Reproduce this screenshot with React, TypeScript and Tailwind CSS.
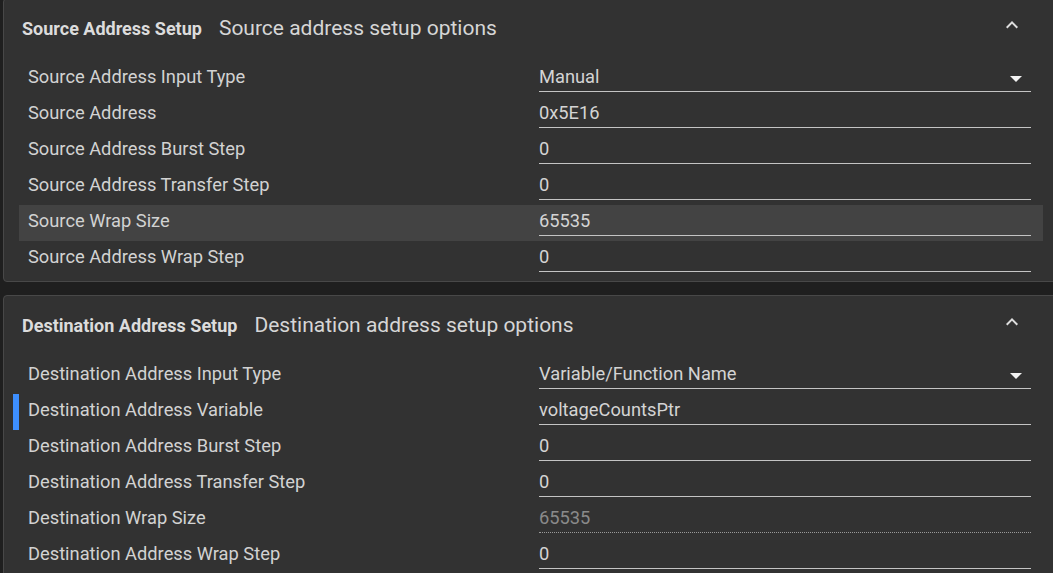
import React from 'react';

type Field = {
  label: string;
  value: string;
  select?: boolean;
  disabled?: boolean;
  hover?: boolean;
  active?: boolean;
};

const sourceFields: Field[] = [
  { label: 'Source Address Input Type', value: 'Manual', select: true },
  { label: 'Source Address', value: '0x5E16' },
  { label: 'Source Address Burst Step', value: '0' },
  { label: 'Source Address Transfer Step', value: '0' },
  { label: 'Source Wrap Size', value: '65535', hover: true },
  { label: 'Source Address Wrap Step', value: '0' },
];

const destFields: Field[] = [
  { label: 'Destination Address Input Type', value: 'Variable/Function Name', select: true },
  { label: 'Destination Address Variable', value: 'voltageCountsPtr', active: true },
  { label: 'Destination Address Burst Step', value: '0' },
  { label: 'Destination Address Transfer Step', value: '0' },
  { label: 'Destination Wrap Size', value: '65535', disabled: true },
  { label: 'Destination Address Wrap Step', value: '0' },
];

function ExpandLess() {
  return (
    <svg width="24" height="24" viewBox="0 0 24 24" className="fill-[#dedede]">
      <path d="M12 8l-6 6 1.41 1.41L12 10.83l4.59 4.58L18 14z" />
    </svg>
  );
}

function DropTriangle() {
  return (
    <svg width="12" height="6" viewBox="0 0 12 6" className="fill-[#f2f2f2]">
      <polygon points="0,0 12,0 6,6" />
    </svg>
  );
}

function Row({ field }: { field: Field }) {
  return (
    <div className="flex h-[36px]">
      {/* marqueur de ligne active */}
      <div className={'w-[6px] shrink-0 ' + (field.active ? 'bg-[#3d8fff]' : '')} />
      <div className={'flex flex-1 ' + (field.hover ? 'bg-[#434343]' : '')}>
        <div className="w-[520px] shrink-0 pl-[9px] leading-[32px] text-[18.3px] text-[#d2d2d2]">
          {field.label}
        </div>
        <div
          className={
            'w-[492px] h-[31px] flex items-center pt-[2px] pr-[9px] ' +
            (field.disabled
              ? 'border-b border-dotted border-[#9a9a9a]'
              : 'border-b border-[#c4c4c4]')
          }
        >
          <span
            className={
              'flex-1 text-[18.3px] leading-[28px] ' +
              (field.disabled ? 'text-[#8a8a8a]' : 'text-[#d4d4d4]')
            }
          >
            {field.value}
          </span>
          {field.select && (
            <span className="mt-[4px]">
              <DropTriangle />
            </span>
          )}
        </div>
      </div>
    </div>
  );
}

function Panel({
  title,
  subtitle,
  fields,
  className = '',
}: {
  title: string;
  subtitle: string;
  fields: Field[];
  className?: string;
}) {
  return (
    <section
      className={
        'w-[1062px] rounded-[4px] border border-[#484848] bg-[#323232] pb-[4px] ' + className
      }
    >
      <div className="h-[62px] flex items-center pl-[18px] pr-[40px]">
        <div className="flex items-baseline gap-[17px] pb-[2px]">
          <span className="text-[18px] font-bold text-[#dcdcdc]">{title}</span>
          <span className="text-[21px] text-[#d6d6d6]">{subtitle}</span>
        </div>
        <div className="ml-auto mb-[11px]">
          <ExpandLess />
        </div>
      </div>
      <div className="pl-[9px] pr-[21px]">
        {fields.map((f) => (
          <Row key={f.label} field={f} />
        ))}
      </div>
    </section>
  );
}

export default function App() {
  return (
    <div
      className="h-[573px] w-[1053px] overflow-hidden bg-[#1f1f1f] pl-[3px]"
      style={{ fontFamily: 'Roboto, "Noto Sans", sans-serif' }}
    >
      <Panel
        className="-mt-[2px]"
        title="Source Address Setup"
        subtitle="Source address setup options"
        fields={sourceFields}
      />
      <Panel
        className="mt-[13px]"
        title="Destination Address Setup"
        subtitle="Destination address setup options"
        fields={destFields}
      />
    </div>
  );
}
